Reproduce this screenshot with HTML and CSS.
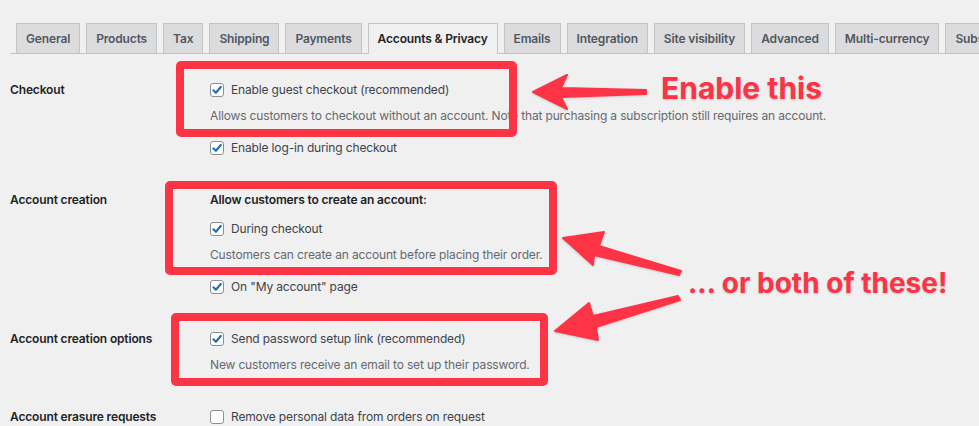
FILE: index.html
```html
<!DOCTYPE html>
<html lang="en">
<head>
    <meta charset="UTF-8">
    <meta name="viewport" content="width=device-width, initial-scale=1.0">
    <title>Accounts &amp; Privacy</title>
    <link rel="stylesheet" href="styles.css">
</head>
<body>

<div class="wrap">
    <nav class="tabs">
        <a class="tab">General</a>
        <a class="tab">Products</a>
        <a class="tab">Tax</a>
        <a class="tab">Shipping</a>
        <a class="tab">Payments</a>
        <a class="tab active">Accounts &amp; Privacy</a>
        <a class="tab">Emails</a>
        <a class="tab">Integration</a>
        <a class="tab">Site visibility</a>
        <a class="tab">Advanced</a>
        <a class="tab">Multi-currency</a>
        <a class="tab">Subscriptions</a>
    </nav>

    <div class="form">
        <div class="row">
            <div class="label">Checkout</div>
            <div class="field">
                <label class="check"><span class="box on"><svg viewBox="0 0 12 12"><path d="M2.4 6.3 L4.9 8.8 L9.8 3"/></svg></span>Enable guest checkout (recommended)</label>
                <p class="desc">Allows customers to checkout without an account. Note that purchasing a subscription still requires an account.</p>
                <label class="check next"><span class="box on"><svg viewBox="0 0 12 12"><path d="M2.4 6.3 L4.9 8.8 L9.8 3"/></svg></span>Enable log-in during checkout</label>
            </div>
        </div>

        <div class="row">
            <div class="label">Account creation</div>
            <div class="field">
                <div class="legend">Allow customers to create an account:</div>
                <label class="check after-legend"><span class="box on"><svg viewBox="0 0 12 12"><path d="M2.4 6.3 L4.9 8.8 L9.8 3"/></svg></span>During checkout</label>
                <p class="desc">Customers can create an account before placing their order.</p>
                <label class="check next"><span class="box on"><svg viewBox="0 0 12 12"><path d="M2.4 6.3 L4.9 8.8 L9.8 3"/></svg></span>On "My account" page</label>
            </div>
        </div>

        <div class="row">
            <div class="label">Account creation options</div>
            <div class="field">
                <label class="check"><span class="box on"><svg viewBox="0 0 12 12"><path d="M2.4 6.3 L4.9 8.8 L9.8 3"/></svg></span>Send password setup link (recommended)</label>
                <p class="desc">New customers receive an email to set up their password.</p>
            </div>
        </div>

        <div class="row">
            <div class="label">Account erasure requests</div>
            <div class="field">
                <label class="check"><span class="box"></span>Remove personal data from orders on request</label>
            </div>
        </div>
    </div>

    <!-- annotations drawn over the screenshot -->
    <div class="notes">
        <div class="mark mark-guest"></div>
        <div class="mark mark-create"></div>
        <div class="mark mark-password"></div>

        <svg class="arrows" viewBox="0 0 979 426" width="979" height="426">
            <polygon points="533,92 567,75 561,88 646,90 646,94 561,97 567,109"/>
            <polygon points="563,238 604,232 599,246 681,271 679,275 594,255 593,265"/>
            <polygon points="555,331 589,303 593,316 678,296 680,300 596,327 598,340"/>
        </svg>

        <div class="callout callout-one">Enable this</div>
        <div class="callout callout-two">... or both of these!</div>
    </div>
</div>

</body>
</html>
```

FILE: styles.css
```css
body {
    margin: 0;
    background-color: #f0f0f1;
    font-family: Inter, "Noto Sans", sans-serif;
    font-size: 12px;
    letter-spacing: -0.15px;
    color: #3c434a;
    overflow: hidden;
}

.wrap {
    position: relative;
    width: 979px;
    height: 426px;
    overflow: hidden;
}

/* tabs */
.tabs {
    display: flex;
    margin: 23px 0 0 10px;
    padding-left: 6px;
    border-bottom: 1px solid #c3c4c7;
    white-space: nowrap;
}

.tab {
    flex: none;
    height: 29px;
    line-height: 30px;
    padding: 0 9px;
    margin-right: 6px;
    margin-bottom: -1px;
    border: 1px solid #c3c4c7;
    border-bottom: none;
    background-color: #dcdcde;
    color: #50575e;
    font-weight: 600;
}

.tab.active {
    background-color: #f0f0f1;
    color: #1d2327;
    height: 30px;
}

/* settings rows */
.form {
    margin-top: 10px;
}

.row {
    display: flex;
    padding: 16px 0;
}

.label {
    width: 210px;
    flex: none;
    padding-left: 10px;
    box-sizing: border-box;
    line-height: 20px;
    font-weight: 600;
    color: #1d2327;
}

.field {
    flex: 1;
}

.check {
    display: flex;
    align-items: center;
    height: 20px;
    line-height: 20px;
}

.check.next {
    margin-top: 12px;
}

.check.after-legend {
    margin-top: 9px;
}

.legend {
    line-height: 20px;
    font-weight: 600;
    color: #1d2327;
}

.box {
    width: 14px;
    height: 14px;
    margin-right: 7px;
    border: 1px solid #8c8f94;
    border-radius: 3px;
    background-color: #fff;
    box-sizing: border-box;
    display: flex;
    align-items: center;
    justify-content: center;
}

.box svg {
    width: 12px;
    height: 12px;
}

.box path {
    fill: none;
    stroke: #2271b1;
    stroke-width: 2.2;
    stroke-linecap: round;
    stroke-linejoin: round;
}

.desc {
    margin: 6px 0 0;
    line-height: 20px;
    color: #646970;
}

/* annotations */
.notes {
    position: absolute;
    left: 0;
    top: 0;
    width: 979px;
    height: 426px;
    pointer-events: none;
}

.mark {
    position: absolute;
    border: 8px solid #fd3446;
    border-radius: 5px;
    box-sizing: border-box;
}

.mark-guest {
    left: 176px;
    top: 61px;
    width: 341px;
    height: 76px;
}

.mark-create {
    left: 165px;
    top: 181px;
    width: 392px;
    height: 94px;
}

.mark-password {
    left: 171px;
    top: 313px;
    width: 377px;
    height: 73px;
}

.arrows {
    position: absolute;
    left: 0;
    top: 0;
    filter: drop-shadow(0 1px 1px rgba(0, 0, 0, 0.15));
}

.arrows polygon {
    fill: #fd3446;
    stroke: #fd3446;
    stroke-width: 2;
    stroke-linejoin: round;
}

.callout {
    position: absolute;
    color: #fd3446;
    font-weight: 700;
    letter-spacing: 0;
    white-space: nowrap;
    text-shadow: 0 1px 2px rgba(0, 0, 0, 0.18);
}

.callout-one {
    left: 661px;
    top: 73px;
    font-size: 30px;
    line-height: 30px;
}

.callout-two {
    left: 688px;
    top: 269px;
    font-size: 28px;
    line-height: 28px;
}
```
